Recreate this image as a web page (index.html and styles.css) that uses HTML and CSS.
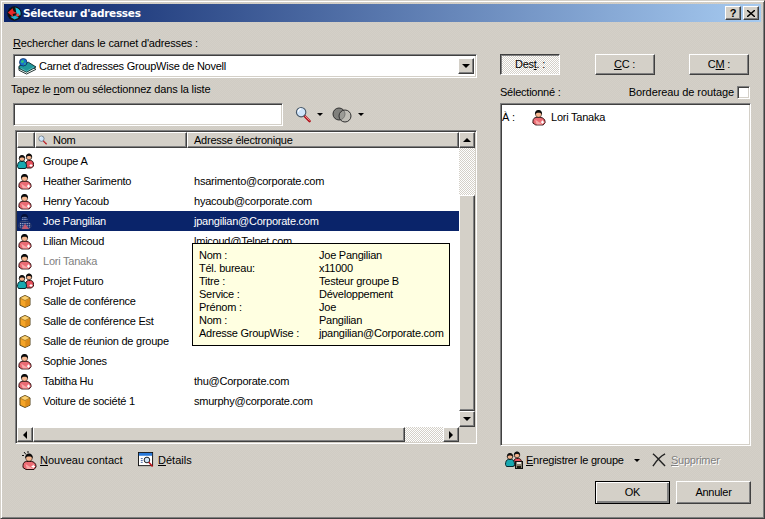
FILE: index.html
```html
<!DOCTYPE html>
<html lang="fr">

<head>
  <meta charset="UTF-8">
  <title>Sélecteur d'adresses</title>
  <link rel="stylesheet" href="styles.css">
</head>

<body>
  <svg class="sprites" width="0" height="0">
    <defs>
      <pattern id="sel-dither" width="2" height="2" patternUnits="userSpaceOnUse">
        <rect width="2" height="2" fill="#0a246a"/>
        <rect width="1" height="1" fill="#e8e8f4"/>
      </pattern>
      <symbol id="person" viewBox="0 0 15 17">
        <path d="M1 12.500C1 10 2.500 8.500 4.500 8.500h5c2 0 4.500 2 4.500 4.500v1L12 16.500H4L1 14.500z" fill="#ec6c74" stroke="#2a0c0c"/>
        <path d="M3.500 11l8 5H5z" fill="#f8a8a8"/>
        <circle cx="7" cy="5" r="3.300" fill="#f6b890" stroke="#201010" stroke-width=".6"/>
        <path d="M3.300 5.500C2.800 2 5 .5 7 .5s4.200 1.500 3.700 5C9.800 3.800 8.500 3.500 7 3.500S4.200 3.800 3.300 5.500z" fill="#0c0c0c"/>
        <path d="M9.500 13.500h3.500M11.200 11.800v3.500" stroke="#fff" stroke-width="1.200"/>
      </symbol>
      <symbol id="person-sel" viewBox="0 0 15 17">
        <path d="M1 12.500C1 10 2.500 8.500 4.500 8.500h5c2 0 4.500 2 4.500 4.500v1L12 16.500H4L1 14.500z" fill="url(#sel-dither)" stroke="#30406a"/>
        <circle cx="7" cy="5" r="3.300" fill="url(#sel-dither)"/>
        <path d="M3.300 5.500C2.800 2 5 .5 7 .5s4.200 1.500 3.700 5C9.800 3.800 8.500 3.500 7 3.500S4.200 3.800 3.300 5.500z" fill="#06123a"/>
        <path d="M7.500 11l4.500 5.500H4z" fill="#c05a70"/>
      </symbol>
      <symbol id="group" viewBox="0 0 17 16">
        <circle cx="12" cy="4" r="2.800" fill="#f4b48e" stroke="#111" stroke-width=".7"/>
        <path d="M9 4.500C8.700 1.800 10.500.5 12 .5s3.300 1.300 3 4C14 3.300 13 3 12 3s-2 .3-3 1.500z" fill="#111"/>
        <path d="M8.500 12.500c0-3 1-5 3-5h2c2 0 3 1.500 3 4v1.500l-2 2h-5z" fill="#e8505c" stroke="#301010"/>
        <circle cx="5" cy="5.500" r="2.800" fill="#f4b48e" stroke="#111" stroke-width=".7"/>
        <path d="M2 6C1.700 3.300 3.500 2 5 2s3.300 1.300 3 4C7 4.800 6 4.500 5 4.500S3 4.800 2 6z" fill="#111"/>
        <path d="M.5 13.500c0-3 1-5 3-5h3c2 0 3 2 3 5l-1 2h-7z" fill="#18a8b0" stroke="#08282c"/>
        <path d="M12.500 12.500h3M14 11v3" stroke="#fff"/>
      </symbol>
      <symbol id="cube" viewBox="-2 -2.500 18 20.500">
        <path d="M7 0l6.500 3.200v9.300L7 15.500.5 12.500V3.200z" fill="#f4a428" stroke="#3a2a08"/>
        <path d="M.5 3.200L7 6.500l6.500-3.300L7 0z" fill="#fcd070" stroke="#5a4010" stroke-width=".6"/>
        <path d="M7.500 7l5.500-2.800v8l-5.500 2.600z" fill="#dc8a18"/>
      </symbol>
      <symbol id="logo" viewBox="0 0 16 16">
        <circle cx="8" cy="8" r="7.700" fill="#111"/>
        <path d="M8 1.500a6.500 6.500 0 0 1 6 9L10 8 9 2z" fill="#20c0d8"/>
        <path d="M3.500 11.500l4.500 3 4.500-2-3.500-2.500z" fill="#20b0d0"/>
        <path d="M1 7l5-4.500 1 3 3.500 2-4.500 1 1 3.500-3-2.500z" fill="#e82828"/>
        <path d="M9 9.500l3-2 1 3-2 1z" fill="#f04848"/>
      </symbol>
      <symbol id="book" viewBox="0 0 20 18">
        <path d="M1 10l10-3 8 5-10 5-8-4z" fill="#eef4ee" stroke="#203030"/>
        <path d="M1 8.500l10-4 8 5-10 5.500-8-4z" fill="#20989c" stroke="#103030"/>
        <path d="M3 11l6 3 8-4.500" stroke="#70c8c8" fill="none" stroke-width=".7"/>
        <circle cx="5.500" cy="4.500" r="4" fill="#1870d0" stroke="#082048" stroke-width=".7"/>
        <path d="M3 3l2.500-1 1 2-2 1.500-1.500-1zM6.500 5.500l1.500-1v2l-1.500 1z" fill="#30c078"/>
      </symbol>
      <symbol id="magnifier" viewBox="0 0 17 18">
        <path d="M9.500 10l6 6" stroke="#b01018" stroke-width="2.600" stroke-linecap="round"/>
        <path d="M10.500 10.500l5 5" stroke="#f09098"/>
        <circle cx="6.500" cy="6.500" r="5" fill="#cfe4fa" stroke="#485868" stroke-width="1.200"/>
        <path d="M3.500 6a3 3 0 0 1 3-3" stroke="#fff" stroke-width="1.200" fill="none"/>
      </symbol>
      <symbol id="circles" viewBox="0 0 20 16">
        <circle cx="7" cy="7" r="6" fill="#80807c" stroke="#303030"/>
        <circle cx="13" cy="9" r="6" fill="#b0b0ac" fill-opacity=".55" stroke="#303030"/>
      </symbol>
      <symbol id="new-contact" viewBox="0 0 15 19">
        <path d="M2 1l2 2.500M6 0v2M0 4.500h2" stroke="#111"/>
        <use href="#person" x="0" y="2" width="15" height="17"/>
      </symbol>
      <symbol id="details" viewBox="0 0 17 17">
        <rect x=".5" y=".5" width="15" height="14" fill="#fff" stroke="#111"/>
        <rect x="1" y="1" width="14" height="3" fill="#2878d8"/>
        <path d="M3 7h2M3 9h2M3 11h2" stroke="#4060a0"/>
        <circle cx="9.500" cy="8.500" r="3" fill="#cfe4fa" stroke="#111"/>
        <path d="M11.500 11l4 4.500" stroke="#c01018" stroke-width="1.600"/>
      </symbol>
      <symbol id="save-group" viewBox="0 0 18 18">
        <use href="#group" x="0" y="0" width="17" height="16"/>
        <rect x="10.500" y="10.500" width="7" height="7" fill="#888070" stroke="#111"/>
        <rect x="12" y="11" width="4" height="2" fill="#e8e8e0"/>
        <rect x="12" y="15" width="4" height="2" fill="#201c10"/>
      </symbol>
      <symbol id="cross" viewBox="0 0 15 15">
        <path d="M1 1c3 2 8 8 13 13M14 1C10 3 5 8 1 14" stroke="#222" stroke-width="1.500" fill="none"/>
      </symbol>
    </defs>
  </svg>

  <div class="dialog">
    <div class="titlebar">
      <svg class="title-logo"><use href="#logo"/></svg>
      <span class="title-text">Sélecteur d'adresses</span>
      <button class="raised caption-btn caption-help">?</button>
      <button class="raised caption-btn caption-close">
        <svg width="8" height="7" viewBox="0 0 8 7"><path d="M0 0l8 7M8 0L0 7" stroke="#000" stroke-width="1.400"/></svg>
      </button>
    </div>

    <div class="content">
      <div class="left">
        <div class="label"><u>R</u>echercher dans le carnet d'adresses :</div>
        <div class="sunken combo">
          <svg class="combo-icon"><use href="#book"/></svg>
          <span class="combo-text">Carnet d'adresses GroupWise de Novell</span>
          <div class="raised sb-btn combo-btn"><i class="tri tri-down"></i></div>
        </div>
        <div class="label hint">Tapez le <u>n</u>om ou sélectionnez dans la liste</div>
        <div class="search-row">
          <div class="sunken search-input"></div>
          <svg class="search-icon"><use href="#magnifier"/></svg>
          <i class="tri tri-down menu-tri"></i>
          <svg class="circles-icon"><use href="#circles"/></svg>
          <i class="tri tri-down menu-tri"></i>
        </div>

        <div class="sunken list">
          <div class="list-body">
            <div class="list-head">
              <div class="raised head-cell head-icon"></div>
              <div class="raised head-cell head-name">
                <svg class="head-search"><use href="#magnifier"/></svg>Nom
              </div>
              <div class="raised head-cell head-addr">Adresse électronique</div>
            </div>
            <div class="rows">
              <div class="row"><svg class="row-icon row-group"><use href="#group"/></svg><span class="name">Groupe A</span></div>
              <div class="row"><svg class="row-icon"><use href="#person"/></svg><span class="name">Heather Sarimento</span><span>hsarimento@corporate.com</span></div>
              <div class="row"><svg class="row-icon"><use href="#person"/></svg><span class="name">Henry Yacoub</span><span>hyacoub@corporate.com</span></div>
              <div class="row row-selected"><svg class="row-icon"><use href="#person-sel"/></svg><span class="name">Joe Pangilian</span><span>jpangilian@Corporate.com</span></div>
              <div class="row"><svg class="row-icon"><use href="#person"/></svg><span class="name">Lilian Micoud</span><span>lmicoud@Telnet.com</span></div>
              <div class="row row-used"><svg class="row-icon"><use href="#person"/></svg><span class="name">Lori Tanaka</span></div>
              <div class="row"><svg class="row-icon row-group"><use href="#group"/></svg><span class="name">Projet Futuro</span></div>
              <div class="row"><svg class="row-icon"><use href="#cube"/></svg><span class="name">Salle de conférence</span></div>
              <div class="row"><svg class="row-icon"><use href="#cube"/></svg><span class="name">Salle de conférence Est</span></div>
              <div class="row"><svg class="row-icon"><use href="#cube"/></svg><span class="name">Salle de réunion de groupe</span></div>
              <div class="row"><svg class="row-icon"><use href="#person"/></svg><span class="name">Sophie Jones</span></div>
              <div class="row"><svg class="row-icon"><use href="#person"/></svg><span class="name">Tabitha Hu</span><span>thu@Corporate.com</span></div>
              <div class="row"><svg class="row-icon"><use href="#cube"/></svg><span class="name">Voiture de société 1</span><span>smurphy@corporate.com</span></div>
            </div>
          </div>
          <div class="vscroll">
            <div class="raised sb-btn"><i class="tri tri-up"></i></div>
            <div class="track vtrack"></div>
            <div class="raised vthumb"></div>
            <div class="raised sb-btn"><i class="tri tri-down"></i></div>
          </div>
          <div class="hscroll">
            <div class="raised sb-btn"><i class="tri tri-left"></i></div>
            <div class="raised hthumb"></div>
            <div class="track htrack"></div>
            <div class="raised sb-btn"><i class="tri tri-right"></i></div>
          </div>
          <div class="corner"></div>

          <div class="tooltip">
            <span>Nom :</span><span>Joe Pangilian</span>
            <span>Tél. bureau:</span><span>x11000</span>
            <span>Titre :</span><span>Testeur groupe B</span>
            <span>Service :</span><span>Développement</span>
            <span>Prénom :</span><span>Joe</span>
            <span>Nom :</span><span>Pangilian</span>
            <span>Adresse GroupWise :</span><span>jpangilian@Corporate.com</span>
          </div>
        </div>

        <div class="actions left-actions">
          <svg class="new-icon"><use href="#new-contact"/></svg>
          <span class="new-label"><u>N</u>ouveau contact</span>
          <svg class="details-icon"><use href="#details"/></svg>
          <span><u>D</u>étails</span>
        </div>
      </div>

      <div class="right">
        <div class="dest-row">
          <button class="btn btn-active">Des<u>t</u>. :</button>
          <button class="raised btn"><u>C</u>C :</button>
          <button class="raised btn">C<u>M</u> :</button>
        </div>
        <div class="selected-row">
          <span>Sélectionné :</span>
          <span class="routing">Bordereau de routage</span>
          <span class="sunken checkbox"></span>
        </div>
        <div class="sunken recipients">
          <div class="recipient">
            <span class="recipient-kind">À :</span>
            <svg class="row-icon"><use href="#person"/></svg>
            <span class="recipient-name">Lori Tanaka</span>
          </div>
        </div>
        <div class="actions right-actions">
          <svg class="save-icon"><use href="#save-group"/></svg>
          <span class="save-label"><u>E</u>nregistrer le groupe</span>
          <i class="tri tri-down menu-tri save-tri"></i>
          <svg class="cross-icon"><use href="#cross"/></svg>
          <span class="disabled"><u>S</u>upprimer</span>
        </div>
        <div class="ok-row">
          <button class="raised btn-main btn-default">OK</button>
          <button class="raised btn-main">Annuler</button>
        </div>
      </div>
    </div>
  </div>
</body>

</html>
```

FILE: styles.css
```css
* {
  box-sizing: border-box;
}

body {
  margin: 0;
  width: 765px;
  height: 519px;
  overflow: hidden;
  background-color: #d4d0c8;
  color: #000;
  font-family: "Liberation Sans", Arial, sans-serif;
  font-size: 11px;
  line-height: 13px;
  letter-spacing: -0.24px;
}

.sprites {
  display: block;
  height: 0;
}

u {
  text-underline-offset: 1px;
}

/* win2k bevels */
.raised {
  background-color: #d4d0c8;
  border: 1px solid;
  border-color: #fff #404040 #404040 #fff;
  box-shadow: inset -1px -1px #808080;
}

.sunken {
  background-color: #fff;
  border: 1px solid;
  border-color: #808080 #fff #fff #808080;
  box-shadow: inset 1px 1px #404040, inset -1px -1px #d4d0c8;
}

.dialog {
  width: 765px;
  height: 519px;
  padding: 3px;
  border: 1px solid;
  border-color: #d4d0c8 #404040 #404040 #d4d0c8;
  box-shadow: inset 1px 1px #fff, inset -1px -1px #808080;
  background-color: #d4d0c8;
  background-image: conic-gradient(#d0ccc4 25%, transparent 0 50%, #d0ccc4 0 75%, transparent 0);
  background-size: 2px 2px;
}

.titlebar {
  display: flex;
  align-items: center;
  height: 18px;
  padding: 0 2px 0 3px;
  background: linear-gradient(to right, #0a246a, #a6caf0);
  color: #fff;
}

.title-logo {
  width: 15px;
  height: 15px;
  margin-top: 1px;
}

.title-text {
  flex: 1;
  margin-left: 1px;
  font-family: "DejaVu Sans", sans-serif;
  font-size: 10.5px;
  font-weight: bold;
  letter-spacing: -0.3px;
}

.caption-btn {
  display: flex;
  align-items: center;
  justify-content: center;
  width: 16px;
  height: 14px;
  padding: 0;
  font-family: "Liberation Sans", sans-serif;
  font-size: 11px;
  font-weight: bold;
  color: #000;
}

.caption-help {
  margin-right: 2px;
}

.content {
  display: flex;
  padding-left: 9px;
}

.left {
  width: 464px;
}

.label {
  height: 13px;
  margin-top: 15px;
  letter-spacing: -0.16px;
}

.combo {
  display: flex;
  align-items: center;
  height: 24px;
  margin-top: 4px;
  padding: 2px;
}

.combo-icon {
  width: 19px;
  height: 17px;
  margin-left: 2px;
}

.combo-text {
  flex: 1;
  margin-left: 2px;
}

.combo-btn {
  height: 100%;
}

.hint {
  margin-top: 5px;
  margin-left: -2px;
}

.search-row {
  display: flex;
  align-items: center;
  height: 23px;
  margin-top: 7px;
}

.search-input {
  width: 270px;
  height: 100%;
}

.search-icon {
  width: 16px;
  height: 17px;
  margin-left: 12px;
}

.circles-icon {
  width: 20px;
  height: 16px;
  margin-left: 9px;
}

.menu-tri {
  margin-left: 6px;
}

.tri {
  display: block;
  width: 0;
  height: 0;
  border: 3px solid transparent;
}

.tri-down {
  border-top: 3px solid #000;
  border-bottom-width: 0;
  border-left-width: 3px;
}

.tri-up {
  border-bottom: 4px solid #000;
  border-top-width: 0;
  border-left-width: 4px;
  border-right-width: 4px;
}

.combo-btn .tri-down,
.vscroll .tri-down {
  border-top-width: 4px;
  border-left-width: 4px;
  border-right-width: 4px;
}

.tri-left {
  border-right: 4px solid #000;
  border-left-width: 0;
  border-top-width: 4px;
  border-bottom-width: 4px;
}

.tri-right {
  border-left: 4px solid #000;
  border-right-width: 0;
  border-top-width: 4px;
  border-bottom-width: 4px;
}

.list {
  position: relative;
  display: grid;
  grid-template-columns: 1fr 16px;
  grid-template-rows: 1fr 15px;
  width: 462px;
  height: 314px;
  margin: 4px 0 0 2px;
  padding: 1px;
}

.list-body {
  overflow: hidden;
}

.list-head {
  display: flex;
  height: 16px;
}

.head-cell {
  display: flex;
  align-items: center;
  white-space: nowrap;
}

.head-icon {
  width: 18px;
}

.head-name {
  width: 152px;
}

.head-search {
  width: 9px;
  height: 10px;
  margin: 0 6px 0 2px;
}

.head-addr {
  flex: 1;
  padding-left: 6px;
}

.rows {
  padding-top: 3px;
}

.row {
  display: flex;
  align-items: center;
  height: 20px;
  padding-left: 1px;
  white-space: nowrap;
}

.row-icon {
  flex: none;
  width: 14px;
  height: 17px;
}

.row-group {
  width: 17px;
  height: 16px;
  margin: 0 -2px 0 -1px;
}

.name {
  width: 151px;
  margin-left: 11px;
}

.row-selected {
  background-color: #0a246a;
  color: #fff;
}

.row-used {
  color: #808080;
}

.vscroll {
  display: flex;
  flex-direction: column;
}

.hscroll {
  display: flex;
}

.sb-btn {
  flex: none;
  display: flex;
  align-items: center;
  justify-content: center;
  width: 16px;
  height: 16px;
}

.hscroll .sb-btn {
  height: 15px;
}

.track {
  background-color: #fff;
  background-image: conic-gradient(#d4d0c8 25%, transparent 0 50%, #d4d0c8 0 75%, transparent 0);
  background-size: 2px 2px;
}

.vtrack {
  height: 47px;
}

.vthumb {
  flex: 1;
}

.hthumb {
  width: 372px;
}

.htrack {
  flex: 1;
}

.corner {
  background-color: #d4d0c8;
}

.tooltip {
  position: absolute;
  left: 176px;
  top: 112px;
  display: grid;
  grid-template-columns: 120px auto;
  grid-auto-rows: 13px;
  align-content: center;
  width: 258px;
  height: 103px;
  padding-left: 6px;
  background-color: #ffffe1;
  border: 1px solid #000;
  white-space: nowrap;
}

.actions {
  display: flex;
  align-items: center;
  height: 18px;
}

.left-actions {
  margin-top: 7px;
  padding-left: 9px;
  letter-spacing: 0;
}

.new-icon {
  width: 15px;
  height: 19px;
}

.new-label {
  width: 98px;
  margin-left: 3px;
}

.details-icon {
  width: 16px;
  height: 16px;
  margin-right: 4px;
}

.right {
  width: 251px;
  margin-left: 23px;
}

.dest-row {
  display: flex;
  justify-content: space-between;
  width: 249px;
  margin-top: 32px;
}

.btn {
  width: 60px;
  height: 21px;
  padding: 0;
  font: inherit;
  letter-spacing: inherit;
  color: #000;
}

.btn-active {
  border: 1px solid;
  border-color: #404040 #fff #fff #404040;
  box-shadow: inset 1px 1px #808080;
  background-color: #fff;
  background-image: conic-gradient(#d4d0c8 25%, transparent 0 50%, #d4d0c8 0 75%, transparent 0);
  background-size: 2px 2px;
}

.selected-row {
  display: flex;
  align-items: center;
  height: 13px;
  margin-top: 11px;
}

.routing {
  margin-left: auto;
  margin-right: 3px;
  letter-spacing: -0.09px;
}

.checkbox {
  width: 13px;
  height: 13px;
  margin-right: 1px;
}

.recipients {
  height: 343px;
  margin-top: 4px;
  padding: 5px 1px;
}

.recipient {
  display: flex;
  align-items: center;
  height: 17px;
}

.recipient-kind {
  width: 30px;
}

.recipient-name {
  margin-left: 5px;
}

.right-actions {
  margin-top: 5px;
  padding-left: 5px;
}

.save-icon {
  width: 18px;
  height: 18px;
}

.save-label {
  width: 108px;
  margin-left: 3px;
}

.save-tri {
  margin-left: 0;
}

.cross-icon {
  width: 14px;
  height: 14px;
  margin-left: 12px;
  margin-right: 5px;
}

.disabled {
  color: #808080;
  text-shadow: 1px 1px #fff;
}

.ok-row {
  display: flex;
  justify-content: flex-end;
  gap: 6px;
  margin-top: 12px;
}

.btn-main {
  width: 75px;
  height: 23px;
  padding: 0;
  font: inherit;
  letter-spacing: inherit;
  color: #000;
}

.btn-default {
  outline: 1px solid #000;
  outline-offset: -1px;
  box-shadow: inset 1px 1px #fff, inset -2px -2px #808080;
}
```
